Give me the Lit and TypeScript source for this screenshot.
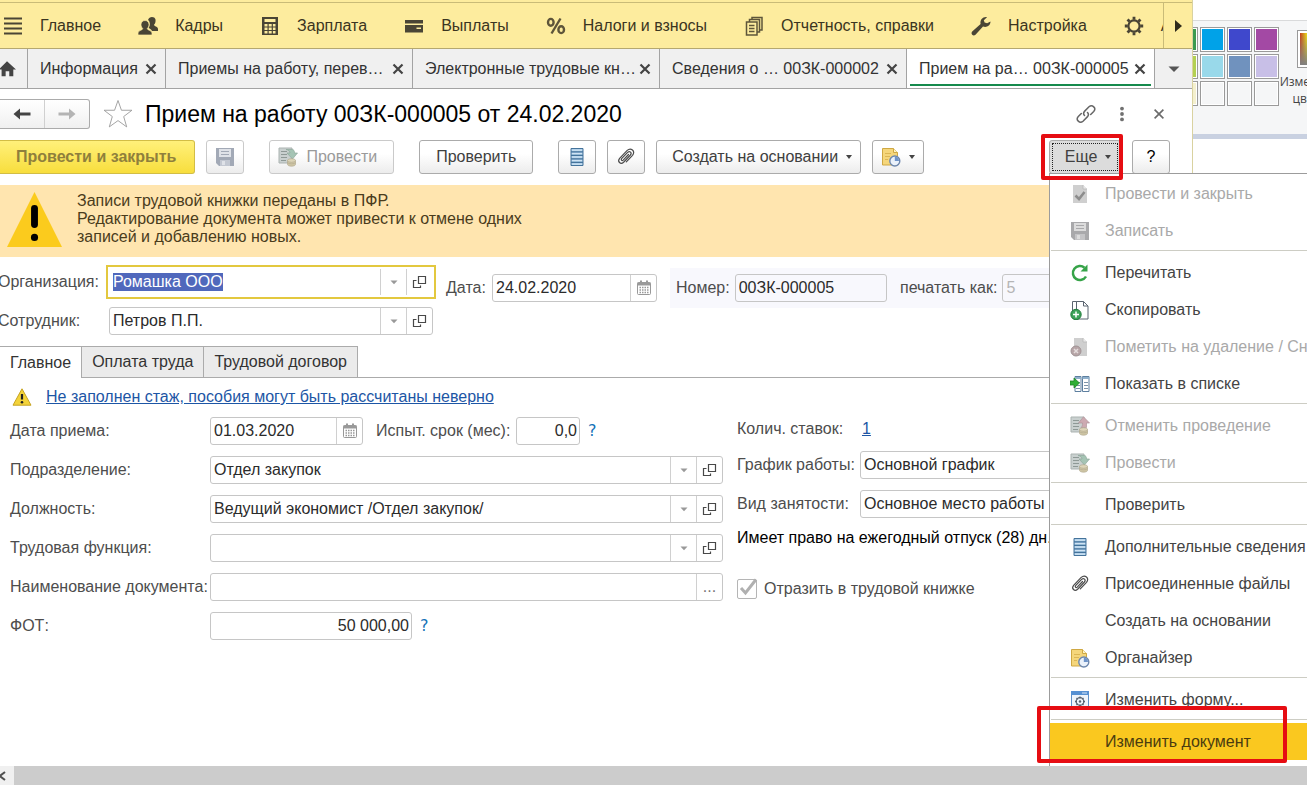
import { LitElement, html, css, svg, nothing, TemplateResult } from "lit";
import { customElement, property } from "lit/decorators.js";
import { classMap } from "lit/directives/class-map.js";

/* ---------- icons ---------- */

const sheetPost = (arrow: string, edge: string, flip: boolean) => svg`
  <path d="M1 1h13v15H1z" fill="#c9d0cf" stroke="#abb3b1"/>
  <path d="M3 4.500h6M3 7.500h6M3 10.500h6M3 13.500h5" stroke="#8e9996"/>
  ${flip
    ? svg`<path d="M13.500 .8l6 6.200h-3v4.500h-5.500c1.200-1 1.500-2 1.500-4.500h-4z" fill=${arrow} stroke=${edge} stroke-width=".7"/>`
    : svg`<path d="M8 2.500h6c2 0 2.500 1.500 2.500 3.500h3l-5 6-5.500-6h3c0-1.700-1.500-3-4-3.500z" fill=${arrow} stroke=${edge} stroke-width=".7"/>`}
  <path d="M9.500 13.500v3.800c0 2.500 8 2.500 8 0v-3.800" fill="#d0c7a5" stroke="#b3ab90" stroke-width=".7"/>
  <ellipse cx="13.500" cy="13.500" rx="4" ry="1.800" fill="#ddd5b8" stroke="#b3ab90" stroke-width=".7"/>
  <path d="M9.500 15.700c1 1.500 7 1.500 8 0" fill="none" stroke="#b3ab90" stroke-width=".7"/>`;

const floppy = (a: string, b: string, c: string) => svg`
  <path d="M1 1h18v18H4l-3-3z" fill=${a}/>
  <path d="M4 2h12v8H4z" fill=${b}/>
  <path d="M6 4.500h8M6 7.500h8" stroke=${a}/>
  <path d="M5 13h10v6H5z" fill=${c}/>
  <path d="M7 14h3v4H7z" fill=${b}/>`;

const ICONS: Record<string, TemplateResult> = {
  menu: svg`<path d="M1 2.500h18M1 7.500h18M1 12.500h18M1 17.500h18" stroke="#4a4535" stroke-width="2"/>`,
  people: svg`<g fill="#4a4535"><path d="M12 1.500c1-1 5-1 5.500 2 .3 2-.2 4-1.500 5.200 0 1.500 4 2 4 4.300v2h-6c-.5-1.500-2-2.500-3.500-3 1.500-2 2.200-6-.5-8 .5-1 1-2 2-2.500z"/>
    <path d="M7 4.500c2.500 0 4 1.800 4 4 0 1.800-.8 3.200-1.700 4 0 2 4.700 1.700 4.700 4.500v2H0v-2c0-2.800 4.700-2.500 4.700-4.500C3.800 11.700 3 10.300 3 8.500c0-2.200 1.500-4 4-4z" stroke="#fdec9e" stroke-width=".7"/></g>`,
  calc: svg`<path d="M2 1h16v18H2z" fill="#4a4535"/><path d="M4.500 3h11v3h-11z" fill="#fdec9e"/>
    <path d="M4.500 8h3v2.500h-3zM8.700 8h3v2.500h-3zM12.900 8h2.600v2.500h-2.600zM4.500 11.500h3V14h-3zM8.700 11.500h3V14h-3zM12.900 11.500h2.600V14h-2.600zM4.500 15h3v2.500h-3zM8.700 15h3v2.500h-3zM12.900 15h2.600v2.500h-2.600z" fill="#fdec9e"/>`,
  card: svg`<path d="M1 4h18v3.500H1zM1 9h18v7.500H1z" fill="#4a4535"/><path d="M12.500 11.500h4.500v1.500h-4.500z" fill="#fdec9e"/>`,
  percent: svg`<g fill="none" stroke="#5e553a" stroke-width="2.400"><ellipse cx="4.800" cy="6.300" rx="2.800" ry="3.400"/><ellipse cx="15.200" cy="13.700" rx="2.800" ry="3.400"/><path d="M14.500 2.500l-9 15"/></g>`,
  sheets: svg`<g fill="#fdec9e" stroke="#5e553a" stroke-width="1.500"><path d="M8 1.500h10V14H8z"/><path d="M5.500 3.500h10V16h-10z"/><path d="M2.500 6h10.500v13H2.500z"/></g>
    <path d="M5 9.500h5.500M5 12.500h5.500M5 15.500h5.500" stroke="#5e553a" stroke-width="1.400"/>`,
  wrench: svg`<path d="M19.500 5.500c0 4-4 6.500-7.500 5L4.500 18.800c-1.200 1-2.500.8-3.300 0s-.9-2.200 0-3.200L9.600 8C8.700 4 12 .5 16 1.200l-3.200 3 .8 2.400 2.500.7z" fill="#4a4535"/>`,
  gear: svg`<g stroke="#4a4535" fill="none"><circle cx="10" cy="10" r="5.600" stroke-width="2.200"/>
    <path d="M10 .8v3M10 16.200v3M.8 10h3M16.200 10h3M3.500 3.500l2.100 2.100M14.400 14.400l2.100 2.100M3.500 16.500l2.100-2.100M14.400 5.600l2.100-2.100" stroke-width="2.800"/></g>`,
  play: svg`<path d="M7 4l7 6-7 6z" fill="#2f2b1c"/>`,
  home: svg`<path d="M10 1.500l10 9h-3V18h-4.500v-5.500h-4V18H4v-7.500H1z" fill="#444"/>`,
  close: svg`<path d="M5.500 5.500l9 9M14.500 5.500l-9 9" stroke="#444" stroke-width="2.200"/>`,
  closeThin: svg`<path d="M6 6l8 8M14 6l-8 8" stroke="#6b6b6b" stroke-width="1.500"/>`,
  down: svg`<path d="M4.500 7.500h11L10 13z" fill="#555"/>`,
  back: svg`<path d="M1.500 10L8 4.500v4h10.500v3H8v4z" fill="#444"/>`,
  forward: svg`<path d="M18.500 10L12 4.500v4H1.500v3H12v4z" fill="#b4b4b4"/>`,
  star: svg`<path d="M10 1l2.300 6.500h7l-5.500 4.200 2 6.900-5.800-4.200-5.800 4.200 2-6.900L.7 7.500h7z" fill="#fff" stroke="#9a9a9a" stroke-width=".6"/>`,
  link: svg`<g fill="none" stroke="#666" stroke-width="1.500" stroke-linecap="round"><path d="M8.500 11.500c-1.400-1.600-1-3.200.2-4.400l4.300-4.300c3.300-2.800 7.700 1.400 4.700 4.700l-3 3"/>
    <path d="M11.500 8.500c1.400 1.600 1 3.200-.2 4.400L7 17.200c-3.300 2.800-7.700-1.400-4.700-4.700l3-3"/></g>`,
  dots: svg`<g fill="#707070"><circle cx="10" cy="4" r="2.100"/><circle cx="10" cy="10" r="2.100"/><circle cx="10" cy="16" r="2.100"/></g>`,
  floppy: floppy("#a2a9b6", "#dfe2e8", "#c3c8d2"),
  floppyGrey: floppy("#a9a9ab", "#dcdcdc", "#c4c4c6"),
  post: sheetPost("#a5c4b4", "#8fa99c", false),
  unpost: sheetPost("#cdaab1", "#b0969c", true),
  list: svg`<path d="M4 1.500h12v17H4z" fill="#a9cbe6" stroke="#44739b"/><path d="M4 4.800h12M4 8.300h12M4 11.800h12M4 15.300h12" stroke="#44739b" stroke-width="1.200"/>
    <path d="M5 3.200h10M5 6.600h10M5 10h10M5 13.600h10M5 17.200h10" stroke="#d4e6f4"/>`,
  clip: svg`<path d="M12.500 7.500l-5.300 5.600c-1.100 1.100-2.600-.2-1.600-1.400l6-6.300c2.200-2 4.700.3 2.800 2.600l-6.800 7.200c-3 2.700-6.600-.5-4-3.800l7.600-8c3.700-3.400 8.500.7 5.300 4.900l-6.200 6.600" fill="none" stroke="#4c4c4c" stroke-width="1.200" stroke-linecap="round"/>`,
  organizer: svg`<path d="M1.500 1.500h11l4 4V18h-15z" fill="#f5d67b" stroke="#cfa843"/><path d="M12.500 1.500v4h4" fill="#fff3c4" stroke="#cfa843"/>
    <path d="M4 6.500h6M4 9.500h5M4 12.500h3" stroke="#dcb654"/><circle cx="13.800" cy="14" r="5" fill="#eaf1fa" stroke="#6d87ad" stroke-width="1.400"/>
    <path d="M13.800 14V9.800a4.200 4.200 0 0 1 4.200 4.200z" fill="#6d93c9"/>`,
  calendar: svg`<g fill="none" stroke="#999"><path d="M4.500 4.500h11a1 1 0 0 1 1 1v10a1 1 0 0 1-1 1h-11a1 1 0 0 1-1-1v-10a1 1 0 0 1 1-1z"/><path d="M3.500 6h13" stroke-width="3"/><path d="M7 2.500v3M13 2.500v3" stroke-width="2"/>
    <path d="M5.500 9.500h9M5.500 12h9M5.500 14.500h9" stroke-width="1.400" stroke-dasharray="1.500 1"/></g>`,
  open: svg`<path d="M8.500 4.500h7v7h-7zM6.500 8.500h-3v7h7v-2" fill="none" stroke="#484848" stroke-width="1.200"/>`,
  caret: svg`<path d="M6.500 8.500h7L10 12.300z" fill="#999"/>`,
  alert: svg`<path d="M10 1.800l9 16.400H1z" fill="#f3d33a" stroke="#c6a321" stroke-linejoin="round"/><path d="M10 7v5.500" stroke="#222" stroke-width="2.200"/><circle cx="10" cy="15.200" r="1.300" fill="#222"/>`,
  alertBig: svg`<path d="M10 0l10 20H0z" fill="#fbcb1d"/><path d="M10 6v5.800" stroke="#000" stroke-width="2.500" stroke-linecap="round"/><circle cx="10" cy="16.500" r="1.300"/>`,
  sheetCheck: svg`<path d="M3 1h10l4 4v14H3z" fill="#cfcfcf"/><path d="M13 1v4h4" fill="#e8e8e8" stroke="#b5b5b5" stroke-width=".7"/><path d="M5.500 11.500l3.500 3.500 5.500-7" fill="none" stroke="#8d8d8d" stroke-width="2.600"/>`,
  refresh: svg`<path d="M16 13.500A7 7 0 1 1 14.500 4.700" fill="none" stroke="#36a348" stroke-width="2.500"/><path d="M17.500 1.500v7H10.500z" fill="#36a348"/>`,
  copy: svg`<path d="M2.500 12V1.500h9" fill="none" stroke="#5b6470"/><path d="M6.500 1.500h7l4.500 4.500v13H6.500z" fill="#fff" stroke="#5b6470"/><path d="M13.500 1.500V6H18" fill="none" stroke="#5b6470"/>
    <circle cx="6" cy="14.500" r="5.200" fill="#3da35a" stroke="#227a3c"/><path d="M6 11.500v6M3 14.500h6" stroke="#fff" stroke-width="1.500"/>`,
  sheetCross: svg`<path d="M4 1h9l4 4v14H4z" fill="#cfcfcf"/><path d="M13 1v4h4" fill="#e8e8e8" stroke="#b5b5b5" stroke-width=".7"/><circle cx="6" cy="14" r="5" fill="#b7a5a7" stroke="#a09395"/><path d="M4 12l4 4M8 12l-4 4" stroke="#e4dcdc" stroke-width="1.500"/>`,
  showList: svg`<path d="M5 2.500h6v15H5zM12.500 2.500H19v15h-6.500z" fill="#fff" stroke="#5d7f9f"/><path d="M5 4h6M12.500 4H19" stroke="#8fb0cc" stroke-width="2"/><path d="M6 8.500h4M14 8.500h4M6 11.500h4M14 11.500h4M6 14.500h4M14 14.500h4" stroke="#7c93a9"/>
    <path d="M0 7h4V4l5.500 5L4 14v-3H0z" fill="#2fae35" stroke="#1f8426" stroke-width=".8"/>`,
  form: svg`<path d="M1.500 1.500h17v17h-17z" fill="#eef4fb" stroke="#5e8fc7"/><path d="M1 1h18v4H1z" fill="#5690d2"/><path d="M12 3h5" stroke="#d4e4f6"/>
    <circle cx="10" cy="11.500" r="3.800" fill="none" stroke="#566270" stroke-width="1.200"/><circle cx="10" cy="11.500" r="1.200" fill="#566270"/>
    <path d="M10 6.500v2M10 14.500v2M5 11.500h2M13 11.500h2M6.500 8l1.400 1.400M12.100 13.600l1.400 1.400M6.500 15l1.400-1.400M12.100 9.400L13.500 8" stroke="#566270" stroke-width="1.300"/>`,
  chevronLeft: svg`<path d="M12.500 5L6 10l6.500 5" fill="none" stroke="#505050" stroke-width="2.600"/>`,
};

const icon = (name: string, size = "") => html`<svg class="icon ${size}" viewBox="0 0 20 20" aria-hidden="true">${ICONS[name]}</svg>`;

/* ---------- shared styles ---------- */

const base = css`
  *, *::before, *::after { box-sizing: border-box; }
  button, input { font: inherit; color: inherit; margin: 0; }
  button { cursor: default; padding: 0; border: 0; background: none; white-space: nowrap; }
  .icon { width: 20px; height: 20px; flex: none; display: block; }
  .icon.s16 { width: 16px; height: 16px; }
  .icon.s18 { width: 18px; height: 18px; }
  .icon.s22 { width: 22px; height: 22px; }
  .icon.s30 { width: 30px; height: 30px; }
  .icon.s55 { width: 55px; height: 55px; }
`;

/* ---------- text field with trailing buttons ---------- */

@customElement("form-field")
class FormField extends LitElement {
  @property() label = "";
  @property() value = "";
  @property() actions = "";
  @property({ type: Boolean }) active = false;
  @property({ type: Boolean }) end = false;
  @property({ type: Boolean }) dim = false;
  @property({ type: Boolean }) faint = false;

  static styles = [base, css`
    :host { display: flex; align-items: center; min-width: 0; }
    label { flex: none; width: var(--label, auto); margin-right: var(--label-gap, 0); color: #4d4d4d; white-space: nowrap; }
    .box { flex: 1; min-width: 0; display: flex; height: 28px; border: 1px solid #c6c6c6; border-radius: 3px; background: #fff; }
    .box.dim { background: transparent; }
    .box.active { border-color: transparent; outline: 2px solid #e3c83f; outline-offset: 1px; border-radius: 0; }
    input { flex: 1; min-width: 0; width: 0; padding: 0 3px; border: 0; outline: 0; background: transparent; color: #2b2b2b; caret-color: transparent; }
    input::selection { background: #5068bc; color: #fff; }
    .end { text-align: right; padding: 0 2px; }
    .faint { color: #b5b5b5; }
    .action { flex: none; width: 26px; display: flex; align-items: center; justify-content: center; border-left: 1px solid #d0d0d0; color: #777; }
  `];

  firstUpdated() {
    if (this.active) {
      const input = this.renderRoot.querySelector("input")!;
      input.focus();
      input.select();
    }
  }

  render() {
    const names = this.actions ? this.actions.split(" ") : [];
    const titles: Record<string, string> = { caret: "Выбрать", open: "Открыть", calendar: "Календарь", more: "Изменить" };
    return html`
      <label for="f">${this.label}</label>
      <div class=${classMap({ box: true, active: this.active, dim: this.dim })}>
        <input id="f" class=${classMap({ end: this.end, faint: this.faint })} .value=${this.value} />
        ${names.map((n) => html`<button class="action" title=${titles[n]}>${n === "more" ? "..." : icon(n)}</button>`)}
      </div>`;
  }
}

/* ---------- drop-down menu ---------- */

interface MenuEntry { text?: string; icon?: string; off?: boolean; current?: boolean; }

const MENU: MenuEntry[] = [
  { text: "Провести и закрыть", icon: "sheetCheck", off: true },
  { text: "Записать", icon: "floppyGrey", off: true },
  {},
  { text: "Перечитать", icon: "refresh" },
  { text: "Скопировать", icon: "copy" },
  { text: "Пометить на удаление / Снять пометку", icon: "sheetCross", off: true },
  { text: "Показать в списке", icon: "showList" },
  {},
  { text: "Отменить проведение", icon: "unpost", off: true },
  { text: "Провести", icon: "post", off: true },
  {},
  { text: "Проверить" },
  {},
  { text: "Дополнительные сведения", icon: "list" },
  { text: "Присоединенные файлы", icon: "clip" },
  { text: "Создать на основании" },
  { text: "Органайзер", icon: "organizer" },
  {},
  { text: "Изменить форму...", icon: "form" },
  {},
  { text: "Изменить документ", current: true },
];

@customElement("more-menu")
class MoreMenu extends LitElement {
  static styles = [base, css`
    :host { display: block; border: 1px solid #9c9c9c; background: #fff; padding: 1px 0 8px; }
    .item { display: flex; align-items: center; gap: 15px; width: 100%; height: 37px; padding-left: 20px; color: #444; text-align: left; }
    .item:disabled { color: #a9a9a9; }
    .item.current { background: #fac81f; color: #4a3c10; position: relative; }
    .slot { width: 20px; flex: none; }
    .line { height: 1px; margin: 1px 0 3px 1px; background: #cdcdc4; }
    .mark { position: absolute; left: -13px; top: -17px; width: 250px; height: 57px; border: 4px solid #e60d12; border-radius: 2px; pointer-events: none; }
  `];

  render() {
    return MENU.map((m) => m.text
      ? html`<button class="item ${m.current ? "current" : ""}" role="menuitem" ?disabled=${!!m.off}>
          <span class="slot">${m.icon ? icon(m.icon) : nothing}</span>${m.text}${m.current ? html`<span class="mark"></span>` : nothing}
        </button>`
      : html`<div class="line"></div>`);
  }
}

/* ---------- palette of the window behind ---------- */

const PALETTE = [
  ["#3c9a50", "#00a2e8", "#3f48cc", "#a349a4"],
  ["#b3d052", "#99d9ea", "#7092be", "#c8bfe7"],
  ["#f4f0cf", "#f5f6f7", "#f5f6f7", "#f5f6f7"],
];

@customElement("palette-panel")
class PalettePanel extends LitElement {
  static styles = [base, css`
    :host { display: block; background: #fff; overflow: hidden; border-left: 1px solid #d9d2a0; }
    .ribbon { display: flex; gap: 3px; height: 119px; margin-top: 20px; border-top: 1px solid #d9dadb; border-bottom: 5px solid #c9d1e1; background: #f5f6f7; }
    .grid { flex: none; display: grid; grid-template-columns: repeat(4, 25px); grid-auto-rows: 25px; gap: 2px; padding-top: 6px; margin-left: -20px; }
    .swatch { border: 1px solid #9a9a9a; padding: 1px; background: #fff; }
    .fill { display: block; width: 100%; height: 100%; }
    .edit { flex: none; display: flex; flex-direction: column; align-items: center; padding-top: 10px; width: 62px; font: 12px/17px "Open Sans", "Noto Sans", sans-serif; color: #444; white-space: normal; }
    .rainbow { flex: none; width: 30px; height: 36px; margin-bottom: 6px; border: 2px solid #fff; outline: 1px solid #999; background: linear-gradient(to bottom, transparent, #808080), linear-gradient(to right, #c33c1c, #e8d31c, #35b44a, #2a6fd0, #a02fb0); }
  `];

  render() {
    return html`<div class="ribbon">
      <div class="grid">${PALETTE.flat().map((c) => html`<button class="swatch" aria-label="Цвет"><span class="fill" style="background:${c}"></span></button>`)}</div>
      <button class="edit"><span class="rainbow"></span>Изменение цветов</button>
    </div>`;
  }
}

/* ---------- page ---------- */

const SECTIONS = [
  ["menu", "Главное"], ["people", "Кадры"], ["calc", "Зарплата"], ["card", "Выплаты"],
  ["percent", "Налоги и взносы"], ["sheets", "Отчетность, справки"], ["wrench", "Настройка"], ["gear", "Администрирование"],
];

const TABS = ["Информация", "Приемы на работу, перев…", "Электронные трудовые кн…", "Сведения о … 00ЗК-000002", "Прием на ра… 00ЗК-000005"];

@customElement("app-root")
class AppRoot extends LitElement {
  static styles = [base, css`
    :host { display: flex; flex-direction: column; height: 100vh; overflow: hidden; background: #fff; font: 16px/18px "Liberation Sans", Arial, sans-serif; color: #333; }
    .desktop { flex: 1; min-height: 0; display: flex; overflow: hidden; }
    .window { flex: 1; min-width: 0; }
    palette-panel { flex: none; width: 115px; }

    .sections { display: flex; height: 49px; border-bottom: 1px solid #b5a870; background: #fdec9e; padding-top: 2px; }
    .sections-in { flex: 1; min-width: 0; display: flex; gap: 37px; padding-left: 3px; overflow: hidden; border-top: 1px solid #c9bb78; }
    .section { flex: none; display: flex; align-items: center; gap: 17px; color: #3b3521; }
    .scroll { flex: none; width: 29px; display: flex; align-items: center; justify-content: center; border-left: 1px solid #c9bb78; border-top: 1px solid #c9bb78; }

    .tabs { display: flex; height: 40px; background: #f0f0f0; border-bottom: 1px solid #a3a3a3; }
    .home { flex: none; width: 28px; padding-right: 11px; display: flex; align-items: center; justify-content: flex-end; border-right: 1px solid #a3a3a3; }
    .tab { flex: 0 1 247px; min-width: 0; display: flex; align-items: center; justify-content: space-between; padding: 0 4px 0 12px; border-right: 1px solid #a3a3a3; position: relative; }
    .tab.short { flex-basis: 138px; }
    .tab .name { min-width: 0; overflow: hidden; }
    .tab.on { background: #fff; flex-basis: 248px; }
    .tab.on::after { content: ""; position: absolute; left: 3px; right: 3px; bottom: 2px; height: 2px; background: #168a4d; }
    .all { flex: 1; display: flex; align-items: center; justify-content: center; }

    .title { display: flex; align-items: center; height: 50px; padding-right: 22px; }
    .nav { display: flex; width: 90px; height: 30px; border: 1px solid #ababab; border-left: 0; border-radius: 0 3px 3px 0; background: linear-gradient(#fff, #f0f0f0); }
    .nav button { flex: 1; display: flex; align-items: center; justify-content: center; }
    .nav button + button { border-left: 1px solid #d0d0d0; }
    .star { margin: 0 12px 0 13px; }
    h1 { flex: 1; margin: 0; font-size: 23px; line-height: 28px; font-weight: 400; color: #000; white-space: nowrap; }
    .tools { display: flex; gap: 17px; align-items: center; }

    .toolbar { display: flex; gap: 11px; padding: 1px 22px 0 0; height: 46px; }
    .btn { height: 34px; min-width: 38px; display: flex; align-items: center; justify-content: center; gap: 8px; padding: 0 8px; border: 1px solid #ababab; border-radius: 3px; background: linear-gradient(#fff 40%, #ececec); color: #404040; }
    .btn.wide { padding: 0 16px; }
    .btn.drop { padding: 0 8px 0 15px; }
    .btn.primary { padding: 0 18px 0 16px; border-left: 0; border-color: #d2bd45; border-radius: 0 3px 3px 0; background: linear-gradient(#fff07a, #f8de3d); color: #8f7f3c; font-weight: 700; }
    .btn.off { border-color: #cacaca; color: #9a9a9a; }
    .btn.off.wide { padding: 0 16px 0 8px; }
    .gap { margin-left: 14px; }
    .tri { border: 3px solid transparent; border-top: 4px solid #444; border-bottom: 0; }
    .spacer { flex: 1; }
    .more { position: relative; }
    .more .btn { width: 72px; background: #dcdcdc; outline: 1px dotted #222; outline-offset: -4px; padding: 0 5px 0 11px; }
    .more more-menu { position: absolute; z-index: 2; top: 33px; left: 0; width: 300px; }
    .more .mark { position: absolute; z-index: 3; left: -8px; top: -6px; width: 82px; height: 46px; border: 4px solid #e60d12; border-radius: 2px; pointer-events: none; }
    .help { color: #000; }

    .banner { display: flex; gap: 15px; height: 72px; padding: 7px 0 0 7px; background: #ffe5af; color: #4a3c1c; }
    .banner p { margin: 0; white-space: pre-line; }

    .head { display: flex; align-items: flex-start; margin-left: -2px; height: 89px; padding-top: 11px; }
    .who { width: 435px; display: grid; gap: 11px; --label: 111px; }
    .date { width: 211px; margin: 6px 13px 0 13px; --label: 46px; }
    .number { flex: 1; display: flex; gap: 13px; height: 40px; align-items: center; padding-left: 6px; background: #f8f8fd; --label-gap: 5px; }
    .number .n { flex: none; width: 211px; }
    .number .p { flex: 1; }

    .pages { display: flex; border-bottom: 1px solid #ababab; }
    .page { height: 31px; padding: 0 10px; border: 1px solid #ababab; border-left: 0; border-bottom: 0; background: #ebebeb; }
    .page.on { background: #fff; height: 32px; margin-bottom: -1px; }

    .body { padding: 9px 22px 0 10px; }
    .warn { display: flex; gap: 14px; align-items: center; height: 20px; padding-left: 2px; }
    a { color: #1d56a5; }
    .cols { display: grid; grid-template-columns: 713fr 433fr; gap: 14px; padding-top: 10px; }
    .rows { display: grid; gap: 11px; align-content: start; --label: 200px; }
    .pair { display: flex; gap: 13px; align-items: center; }
    .pair .hire { flex: none; width: 353px; }
    .pair .trial { flex: none; width: 204px; --label: auto; --label-gap: 6px; margin-right: -5px; }
    .pair .pay { flex: none; width: 402px; margin-right: -5px; }
    .q { color: #1472b8; font-family: "DejaVu Sans", sans-serif; }
    .right { display: grid; align-content: start; gap: 11px; --label: 123px; color: #4d4d4d; }
    .rate { display: flex; height: 23px; align-items: center; }
    .rate span { width: 125px; }
    .note { color: #000; margin: 0; white-space: nowrap; }
    .check { display: flex; align-items: center; gap: 7px; height: 20px; margin-top: 21px; }
    .check input { appearance: none; width: 20px; height: 20px; border: 1px solid #b5b5b5; border-radius: 2px; background: #fff; }
    .check .tickbox { position: relative; display: flex; }
    .check .tick { position: absolute; left: 1px; top: -1px; pointer-events: none; }

    .hscroll { flex: none; display: flex; height: 19px; background: #ccc; }
    .hscroll button { width: 14px; padding-right: 8px; background: #f0f0f0; display: flex; align-items: center; justify-content: center; }
  `];

  render() {
    return html`
      <div class="desktop">
        <main class="window">
          <nav class="sections">
            <div class="sections-in">
              ${SECTIONS.map(([i, t]) => html`<button class="section">${icon(i)}<span>${t}</span></button>`)}
            </div>
            <button class="scroll" aria-label="Дальше">${icon("play")}</button>
          </nav>

          <div class="tabs">
            <button class="home" aria-label="Начальная страница">${icon("home", "s18")}</button>
            ${TABS.map((t, i) => html`<div class=${classMap({ tab: true, short: i === 0, on: i === 4 })}>
              <button class="name">${t}</button><button aria-label="Закрыть">${icon("close")}</button></div>`)}
            <button class="all" aria-label="Все вкладки">${icon("down")}</button>
          </div>

          <header class="title">
            <div class="nav"><button aria-label="Назад">${icon("back")}</button><button aria-label="Вперед">${icon("forward")}</button></div>
            <button class="star" aria-label="В избранное">${icon("star", "s30")}</button>
            <h1>Прием на работу 00ЗК-000005 от 24.02.2020</h1>
            <div class="tools">
              <button aria-label="Ссылка">${icon("link")}</button>
              <button aria-label="Меню">${icon("dots", "s18")}</button>
              <button aria-label="Закрыть">${icon("closeThin", "s22")}</button>
            </div>
          </header>

          <div class="toolbar">
            <button class="btn primary">Провести и закрыть</button>
            <button class="btn off" aria-label="Записать">${icon("floppy")}</button>
            <button class="btn off wide gap">${icon("post")}Провести</button>
            <button class="btn wide gap">Проверить</button>
            <button class="btn gap" aria-label="Дополнительные сведения">${icon("list")}</button>
            <button class="btn" aria-label="Присоединенные файлы">${icon("clip")}</button>
            <button class="btn drop">Создать на основании<span class="tri"></span></button>
            <button class="btn" aria-label="Органайзер">${icon("organizer")}<span class="tri"></span></button>
            <div class="spacer"></div>
            <div class="more">
              <button class="btn">Еще<span class="tri"></span></button>
              <more-menu role="menu"></more-menu>
              <span class="mark"></span>
            </div>
            <button class="btn help">?</button>
          </div>

          <section class="banner">
            ${icon("alertBig", "s55")}
            <p>Записи трудовой книжки переданы в ПФР.
Редактирование документа может привести к отмене одних
записей и добавлению новых.</p>
          </section>

          <section class="head">
            <div class="who">
              <form-field label="Организация:" value="Ромашка ООО" actions="caret open" active></form-field>
              <form-field label="Сотрудник:" value="Петров П.П." actions="caret open"></form-field>
            </div>
            <form-field class="date" label="Дата:" value="24.02.2020" actions="calendar"></form-field>
            <div class="number">
              <form-field class="n" label="Номер:" value="00ЗК-000005" dim></form-field>
              <form-field class="p" label="печатать как:" value="5" dim faint></form-field>
            </div>
          </section>

          <div class="pages">
            <button class="page on">Главное</button><button class="page">Оплата труда</button><button class="page">Трудовой договор</button>
          </div>

          <section class="body">
            <div class="warn">${icon("alert")}<a href="#">Не заполнен стаж, пособия могут быть рассчитаны неверно</a></div>
            <div class="cols">
              <div class="rows">
                <div class="pair">
                  <form-field class="hire" label="Дата приема:" value="01.03.2020" actions="calendar"></form-field>
                  <form-field class="trial" label="Испыт. срок (мес):" value="0,0" end></form-field>
                  <button class="q">?</button>
                </div>
                <form-field label="Подразделение:" value="Отдел закупок" actions="caret open"></form-field>
                <form-field label="Должность:" value="Ведущий экономист /Отдел закупок/" actions="caret open"></form-field>
                <form-field label="Трудовая функция:" value="" actions="caret open"></form-field>
                <form-field label="Наименование документа:" value="" actions="more"></form-field>
                <div class="pair">
                  <form-field class="pay" label="ФОТ:" value="50 000,00" end></form-field>
                  <button class="q">?</button>
                </div>
              </div>
              <div class="right">
                <div class="rate"><span>Колич. ставок:</span><a href="#">1</a></div>
                <form-field label="График работы:" value="Основной график" actions="caret open"></form-field>
                <form-field label="Вид занятости:" value="Основное место работы" actions="caret open"></form-field>
                <p class="note">Имеет право на ежегодный отпуск (28) дн.</p>
                <label class="check">
                  <span class="tickbox"><input type="checkbox" checked disabled /><svg class="tick icon" viewBox="0 0 20 20" aria-hidden="true"><path d="M3 10l4.500 5L18 1.500" fill="none" stroke="#b0b0b0" stroke-width="3"/></svg></span>
                  Отразить в трудовой книжке
                </label>
              </div>
            </div>
          </section>
        </main>
        <palette-panel></palette-panel>
      </div>
      <div class="hscroll"><button aria-label="Влево">${icon("chevronLeft", "s16")}</button></div>
    `;
  }
}
